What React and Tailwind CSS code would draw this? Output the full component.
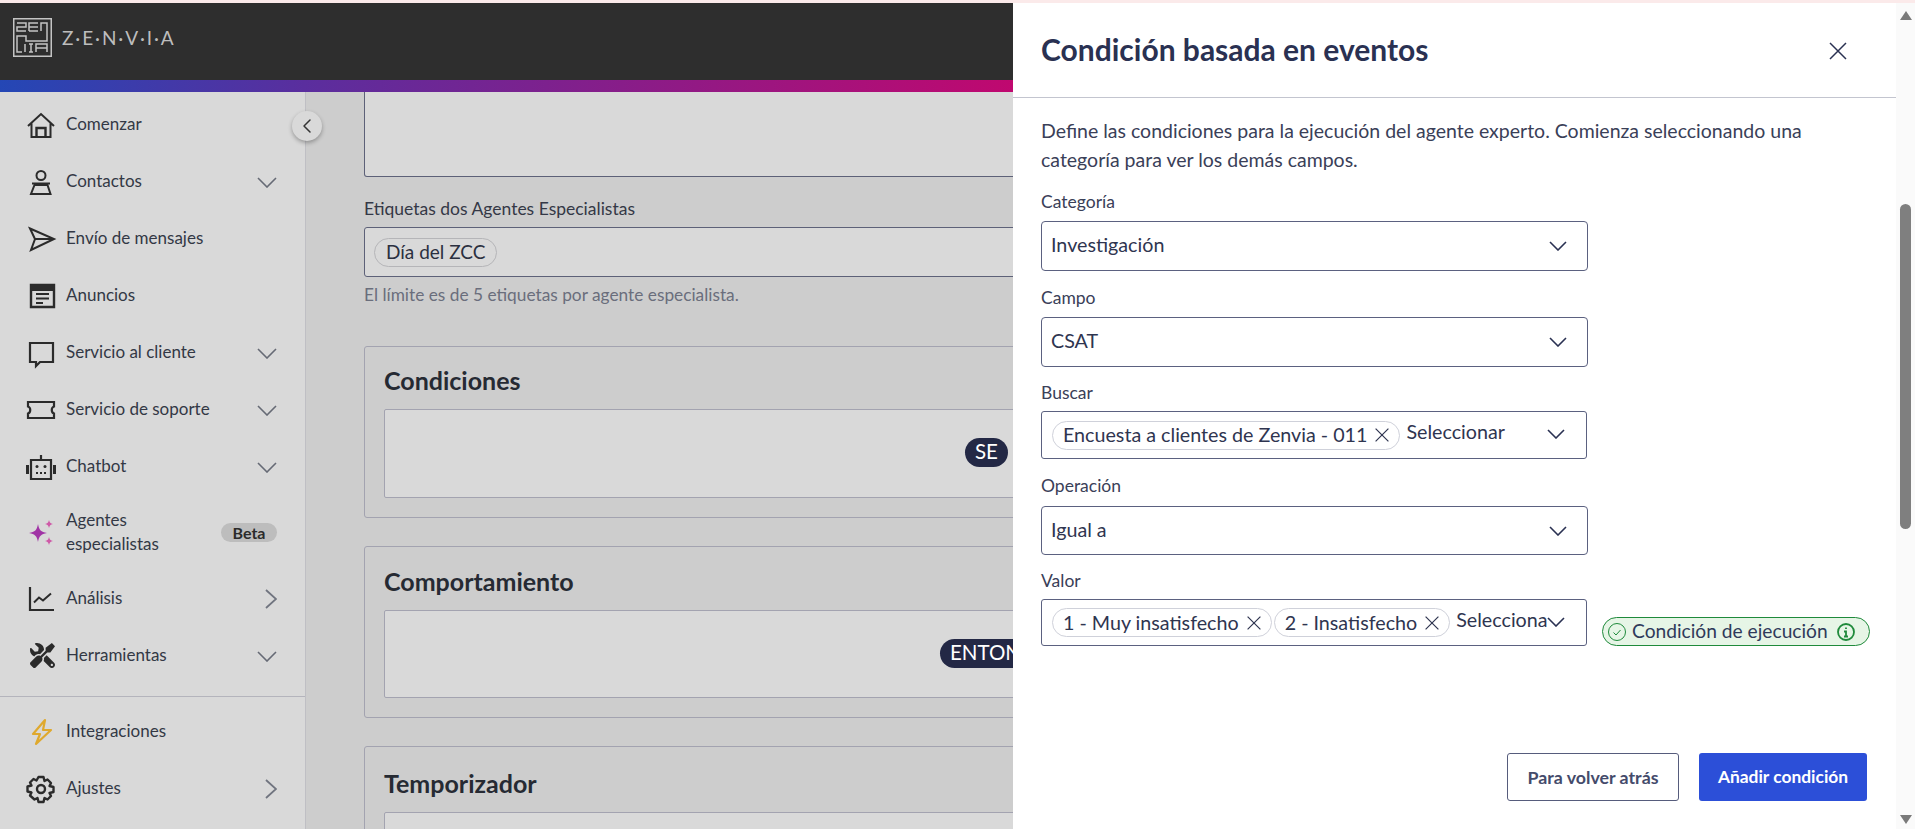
import { ChevronLeft } from 'lucide-react';
import { FaTools } from 'react-icons/fa';

const font = "font-['Lato',sans-serif]";

function IconBox({ children, className = '' }) {
  return (
    <svg width="32" height="32" viewBox="0 0 32 32" fill="none" stroke="#2b2b2b" strokeWidth="2" className={className}>
      {children}
    </svg>
  );
}

const icons = {
  home: (
    <IconBox>
      <path d="M3 17 16 5l13 12M6.500 14.500V28h19V14.500" />
      <path d="M11.500 28V19h9v9" strokeWidth="2.400" />
    </IconBox>
  ),
  user: (
    <IconBox>
      <circle cx="16" cy="9.500" r="4.500" />
      <path d="M9.500 19h13l3 9h-19.500z" />
      <path d="M7 17.500h18" />
    </IconBox>
  ),
  send: (
    <IconBox>
      <path d="M5 5.500 29 16 6 27l4-11zM10 16h19" />
    </IconBox>
  ),
  news: (
    <IconBox>
      <path d="M6 5h23v22H6z" strokeWidth="2.400" />
      <path d="M6 6h23v4H6z" fill="#2b2b2b" />
      <path d="M11 14h13M11 18.500h13M11 23h7" />
    </IconBox>
  ),
  chat: (
    <IconBox>
      <path d="M5 6h23v19H15l-4 4v-4H5z" strokeWidth="2.200" />
    </IconBox>
  ),
  ticket: (
    <IconBox>
      <path d="M3 8h26v4.500c-3 1-3 6 0 7V24H3v-4.500c3-1 3-6 0-7z" strokeWidth="2.200" />
    </IconBox>
  ),
  bot: (
    <IconBox>
      <path d="M6 9h20v19H6zM16 9V4" strokeWidth="2.200" />
      <path d="M2.500 14v9M29.500 14v9" strokeWidth="3" />
      <circle cx="12" cy="15.500" r="1.500" fill="#2b2b2b" stroke="none" />
      <circle cx="20" cy="15.500" r="1.500" fill="#2b2b2b" stroke="none" />
      <path d="M11 22h10" strokeDasharray="2 2" />
    </IconBox>
  ),
  sparkles: (
    <svg width="32" height="32" viewBox="0 0 32 32">
      <path d="M13 7c1 6 3 8 9 9-6 1-8 3-9 9-1-6-3-8-9-9 6-1 8-3 9-9z" fill="#a033a5" />
      <path d="M24 3c.5 2.500 1.500 3.500 4 4-2.500.5-3.500 1.500-4 4-.5-2.500-1.500-3.500-4-4 2.500-.5 3.500-1.500 4-4z" fill="#cf5aa8" />
      <path d="M24 20c.5 2.500 1.500 3.500 4 4-2.500.5-3.500 1.500-4 4-.5-2.500-1.500-3.500-4-4 2.500-.5 3.500-1.500 4-4z" fill="#cf5aa8" />
    </svg>
  ),
  chart: (
    <IconBox>
      <path d="M5 4v23h24" strokeWidth="2.200" />
      <path d="M9 19.500l5-5 4 3 8-7" />
    </IconBox>
  ),
  tools: <FaTools size={25} color="#2b2b2b" className="ml-[5px] -scale-x-100" />,
  bolt: (
    <svg width="32" height="32" viewBox="0 0 32 32" fill="none" stroke="#dfa92e" strokeWidth="2.200" strokeLinejoin="round">
      <path d="M20 4 8 18h7l-4 10 15-14h-8z" />
    </svg>
  ),
  gear: (
    <IconBox>
      <circle cx="16" cy="16" r="4" strokeWidth="2.400" />
      <path
        d="M13.500 4h5l1 4 3-1.500 3.500 3.500-1.500 3 4 1v5l-4 1 1.500 3-3.500 3.500-3-1.500-1 4h-5l-1-4-3 1.500L5 22.500l1.500-3-4-1v-5l4-1-1.500-3L8.500 6l3 1.500z"
        strokeWidth="2.400"
        strokeLinejoin="round"
      />
    </IconBox>
  ),
};

function NavRow({ icon, label, arrow, badge, tall }) {
  return (
    <div className={`flex items-center pl-[25px] pr-[28px] ${tall ? 'h-[75px]' : 'h-[57px]'}`}>
      <span className="w-[41px] shrink-0">{icons[icon]}</span>
      <span className="flex-1 text-[17px] leading-[24px] text-[#333845] -mt-0.5">{label}</span>
      {arrow === 'down' && (
        <svg width="20" height="11" viewBox="0 0 20 11" fill="none" stroke="#666a75" strokeWidth="1.600" className="mt-0.5">
          <path d="M1 1l9 9 9-9" />
        </svg>
      )}
      {arrow === 'right' && (
        <svg width="12" height="20" viewBox="0 0 12 20" fill="none" stroke="#70747f" strokeWidth="1.800" className="mt-px">
          <path d="M1 1l10 9-10 9" />
        </svg>
      )}
      {badge && (
        <span className="w-[56px] h-[19px] rounded-full bg-[#bdbdbd] text-center text-[16px] leading-[19px] font-bold text-[#2b2b2b]">
          {badge}
        </span>
      )}
    </div>
  );
}

function Sidebar() {
  return (
    <aside className="w-[306px] shrink-0 bg-[#d9d9d9] border-r border-[#bfbfc4] pt-1">
      <NavRow icon="home" label="Comenzar" />
      <NavRow icon="user" label="Contactos" arrow="down" />
      <NavRow icon="send" label="Envío de mensajes" />
      <NavRow icon="news" label="Anuncios" />
      <NavRow icon="chat" label="Servicio al cliente" arrow="down" />
      <NavRow icon="ticket" label="Servicio de soporte" arrow="down" />
      <NavRow icon="bot" label="Chatbot" arrow="down" />
      <NavRow icon="sparkles" label={<>Agentes<br />especialistas</>} badge="Beta" tall />
      <NavRow icon="chart" label="Análisis" arrow="right" />
      <NavRow icon="tools" label="Herramientas" arrow="down" />
      <div className="mt-3 mb-1.5 border-t border-[#b4b4bc]" />
      <NavRow icon="bolt" label="Integraciones" />
      <NavRow icon="gear" label="Ajustes" arrow="right" />
    </aside>
  );
}

function SectionCard({ title, pill, pillOffset, pad, innerHeight }) {
  return (
    <section className={`border border-[#a3a3b0] rounded-[3px] bg-[#cdcdcd] px-[19px] ${pad}`}>
      <h2 className="text-[25px] leading-[28px] font-bold text-[#262a33]">{title}</h2>
      <div className={`mt-[15px] bg-[#d9d9d9] border border-[#a3a3b0] rounded-[2px] flex items-center ${innerHeight}`}>
        {pill && (
          <span className={`px-[10px] h-[29px] -mt-0.5 rounded-full bg-[#232845] text-white text-[20.500px] leading-[27px] ${pillOffset}`}>{pill}</span>
        )}
      </div>
    </section>
  );
}

function Content() {
  return (
    <main className="flex-1 min-w-0 overflow-hidden bg-[#cdcdcd] pl-[58px] pr-[294px]">
      <div className="h-[85px] bg-[#d9d9d9] border border-t-0 border-[#5d6178] rounded-b-[3px]" />
      <label className="block mt-[22px] text-[17.500px] leading-[20px] text-[#343846]">Etiquetas dos Agentes Especialistas</label>
      <div className="mt-[8px] h-[50px] bg-[#d9d9d9] border border-[#5d6178] rounded-[3px] flex items-center pl-[9px]">
        <span className="h-[29px] px-[11px] rounded-full border border-[#b5b5b8] text-[19px] leading-[25px] text-[#2b3040]">Día del ZCC</span>
      </div>
      <p className="mt-[8px] text-[17.300px] leading-[20px] text-[#6a6e7c]">El límite es de 5 etiquetas por agente especialista.</p>
      <div className="mt-[41px] flex flex-col gap-[28px]">
        <SectionCard title="Condiciones" pill="SE" pillOffset="ml-[580px]" pad="pt-[19px] pb-[19px]" innerHeight="h-[89px]" />
        <SectionCard title="Comportamiento" pill="ENTONCES" pillOffset="ml-[555px]" pad="pt-[20px] pb-[19px]" innerHeight="h-[88px]" />
        <SectionCard title="Temporizador" pad="pt-[22px] pb-[19px]" innerHeight="h-[88px]" />
      </div>
    </main>
  );
}

function Chev({ className = '' }) {
  return (
    <svg width="18" height="10" viewBox="0 0 18 10" fill="none" stroke="#2a3152" strokeWidth="1.600" className={`shrink-0 ${className}`}>
      <path d="M1 1l8 8 8-8" />
    </svg>
  );
}

function CrossIcon({ size }) {
  return (
    <svg width={size} height={size} viewBox="0 0 20 20" fill="none" stroke="currentColor" strokeWidth="1.500" className="shrink-0">
      <path d="M2 2l16 16M18 2 2 18" />
    </svg>
  );
}

function Label({ children, className = '' }) {
  return <label className={`block text-[17.500px] leading-[20px] text-[#3a4058] ${className}`}>{children}</label>;
}

function SelectBox({ value, className = '' }) {
  return (
    <div className={`w-[547px] border border-[#5b6180] rounded-[4px] flex items-center justify-between pl-[9px] pr-[20px] text-[19.700px] text-[#2f3550] ${className}`}>
      <span className="-mt-0.5">{value}</span>
      <Chev />
    </div>
  );
}

function Chip({ label }) {
  return (
    <span className="shrink-0 h-[29px] pl-[10px] pr-[9px] rounded-full border border-[#cfd1da] flex items-center gap-[7px] text-[19.700px] text-[#2f3550] whitespace-nowrap">
      {label}
      <CrossIcon size={16} />
    </span>
  );
}

function MultiBox({ chips, placeholder, className }) {
  return (
    <div className={`w-[546px] shrink-0 border border-[#5b6180] rounded-[3px] flex items-center pl-[10px] pr-[21px] ${className}`}>
      <div className="flex gap-[2px]">
        {chips.map((c) => <Chip key={c} label={c} />)}
      </div>
      <span className="flex-1 min-w-0 overflow-hidden whitespace-nowrap -mt-1.5 ml-[6px] text-[19.700px] text-[#2f3550]">{placeholder}</span>
      <Chev className="-mt-0.5" />
    </div>
  );
}

function Panel() {
  return (
    <div className="absolute top-[3px] right-0 bottom-0 w-[902px] bg-white flex">
      <div className="flex-1 min-w-0 flex flex-col">
        <header className="h-[95px] shrink-0 border-b border-[#c3c5cf] flex items-center justify-between pl-[28px] pr-[48px]">
          <h1 className="text-[30px] font-bold text-[#2a3152] -mt-0.5">Condición basada en eventos</h1>
          <span className="text-[#2a3152] mt-px"><CrossIcon size={20} /></span>
        </header>
        <div className="pl-[28px] pr-[29px] pt-[18px]">
          <p className="text-[19.500px] leading-[29px] text-[#3a4058] max-w-[790px]">
            Define las condiciones para la ejecución del agente experto. Comienza seleccionando una categoría para ver los demás campos.
          </p>
          <Label className="mt-[18px]">Categoría</Label>
          <SelectBox value="Investigación" className="mt-[9px] h-[50px]" />
          <Label className="mt-[17px]">Campo</Label>
          <SelectBox value="CSAT" className="mt-[9px] h-[50px]" />
          <Label className="mt-[16px]">Buscar</Label>
          <MultiBox chips={['Encuesta a clientes de Zenvia - 011']} placeholder="Seleccionar" className="mt-[8px] h-[48px]" />
          <Label className="mt-[17px]">Operación</Label>
          <SelectBox value="Igual a" className="mt-[10px] h-[49px]" />
          <Label className="mt-[16px]">Valor</Label>
          <div className="mt-[8px] flex items-end">
            <MultiBox chips={['1 - Muy insatisfecho', '2 - Insatisfecho']} placeholder="Seleccionar" className="h-[47px]" />
            <span className="ml-[15px] w-[268px] shrink-0 h-[29px] rounded-full border border-[#1f8a3b] bg-[#e6f5e6] flex items-center pl-[4px] gap-[5px] text-[19.200px] text-[#2f3a5a] whitespace-nowrap">
              <svg width="20" height="20" viewBox="0 0 20 20" fill="none" stroke="#1f8a3b" strokeWidth="1" className="shrink-0">
                <circle cx="10" cy="10" r="8.500" />
                <path d="M6.500 10.500l2.500 2.500 4.500-5" />
              </svg>
              Condición de ejecución
              <svg width="20" height="20" viewBox="0 0 20 20" fill="none" stroke="#1f8a3b" strokeWidth="1.800" className="ml-[3px] shrink-0">
                <circle cx="10" cy="10" r="8" />
                <path d="M10 5.500v1.500M8 9.500h2v5M8 14.500h4" />
              </svg>
            </span>
          </div>
          <div className="mt-[107px] flex justify-end gap-[20px]">
            <button className="w-[172px] h-[48px] border border-[#565c7c] rounded-[3px] text-[17.800px] font-bold text-[#444b6b]">Para volver atrás</button>
            <button className="w-[168px] h-[48px] rounded-[3px] bg-[#2c4fd8] text-[17.400px] font-bold text-white">Añadir condición</button>
          </div>
        </div>
      </div>
      {/* scrollbar */}
      <div className="w-[19px] shrink-0 bg-[#fafafa] flex flex-col items-center relative">
        <div className="mt-[8px] w-0 h-0 border-x-[6px] border-x-transparent border-b-[9px] border-b-[#7a7a7a]" />
        <div className="mt-[184px] w-[11px] h-[325px] rounded-full bg-[#7f7f7f]" />
        <div className="absolute bottom-[5px] w-0 h-0 border-x-[6px] border-x-transparent border-t-[9px] border-t-[#7a7a7a]" />
      </div>
    </div>
  );
}

function Logo() {
  return (
    <svg width="39" height="39" viewBox="0 0 39 39" fill="none" stroke="#c4c4c4" strokeWidth="1.500">
      <rect x="0.750" y="0.750" width="37.500" height="37.500" />
      <path d="M4 5h9v4H4v4h9M16 13V5h9M16 9h9M16 13h9M28 13V5h6v18H13v-5H4v16h5M12 26v8M16 26h4M16 34h4M18 26v8M23 34v-8h11v8M23 30h11" />
    </svg>
  );
}

export default function App() {
  return (
    <div className={`relative h-[829px] overflow-hidden flex flex-col bg-[#cdcdcd] ${font}`}>
      <div className="h-[3px] shrink-0 bg-[#fbeaea]" />
      <header className="h-[77px] shrink-0 bg-[#2e2e2e] flex items-center pl-[13px] pb-[8px]">
        <Logo />
        <span className="ml-[10px] text-[19px] tracking-[1.900px] text-[#bdbdbd] mt-px">Z·E·N·V·I·A</span>
      </header>
      <div className="h-[12px] shrink-0 bg-[linear-gradient(90deg,#2447b5_0%,#5a2e9e_30%,#c0086f_100%)] mr-[901px]" />
      <div className="relative flex flex-1 min-h-0">
        <Sidebar />
        <Content />
        <button className="absolute left-[292px] top-[19px] w-[30px] h-[30px] rounded-full bg-[#d9d9d9] shadow-[0_2px_4px_rgba(0,0,0,0.3)] flex items-center justify-center">
          <ChevronLeft size={24} strokeWidth={1.500} className="text-[#333]" />
        </button>
      </div>
      <Panel />
    </div>
  );
}
